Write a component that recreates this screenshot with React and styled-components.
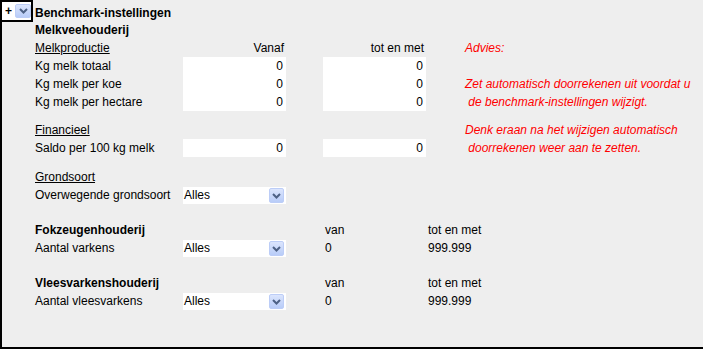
import React from 'react';
import styled, { createGlobalStyle } from 'styled-components';

const Global = createGlobalStyle`
  html, body { margin: 0; padding: 0; background: #eeeeee; }
  body {
    font-family: "Liberation Sans", Arial, sans-serif;
    font-size: 12px;
    color: #000;
  }
`;

const Panel = styled.div`
  box-sizing: border-box;
  width: 703px;
  height: 349px;
  background: #eeeeee;
  border-left: 2px solid #000;
  border-bottom: 2px solid #000;
  display: flex;
  flex-direction: column;
`;

const Header = styled.div`
  display: flex;
  align-items: center;
  height: 22px;
  gap: 2px;
`;

const ToggleBox = styled.div`
  box-sizing: border-box;
  margin-left: -2px;
  width: 33px;
  height: 22px;
  border: 2px solid #000;
  background: #fff;
  display: flex;
  align-items: center;
  justify-content: space-between;
  padding-left: 3px;
  font-size: 12px;
  font-weight: bold;
`;

const ArrowButton = styled.span`
  box-sizing: border-box;
  width: ${p => p.$w}px;
  height: ${p => p.$h}px;
  border: 1px solid #bccdf7;
  border-radius: 2px;
  background: linear-gradient(#dbe5fd, #b8ccf8);
  display: flex;
  align-items: center;
  justify-content: center;
`;

const Title = styled.span`
  font-weight: bold;
  font-size: 12px;
  line-height: 22px;
  padding-top: 3px;
`;

const Body = styled.div`
  padding-left: 33px;
  display: flex;
  flex-direction: column;
`;

const SectionTitle = styled.div`
  font-weight: bold;
  height: ${p => p.$h || 18}px;
  line-height: ${p => p.$h || 18}px;
  white-space: nowrap;
`;

const Section = styled.div`
  margin-top: ${p => p.$mt || 0}px;
`;

const FormGrid = styled.div`
  display: grid;
  grid-template-columns: 148px 103px 37px 103px 39px 1fr;
  grid-template-rows: repeat(4, 18px) 10px repeat(2, 18px);
  line-height: 18px;
  white-space: nowrap;
`;

const RangeGrid = styled.div`
  display: grid;
  grid-template-columns: 148px 103px 37px 103px 1fr;
  grid-auto-rows: 18px;
  line-height: 18px;
  white-space: nowrap;
`;

const Spacer = styled.div`
  grid-column: 1 / -1;
`;

const Label = styled.span``;

const Underlined = styled.span`
  text-decoration: underline;
  text-underline-offset: 1px;
`;

const HeadRight = styled.span`
  text-align: right;
  padding-right: 2px;
`;

const Plain = styled.span`
  padding-left: 2px;
`;

const Field = styled.span`
  background: #fff;
  text-align: right;
  padding-right: 3px;
`;

const Advice = styled.span`
  color: #ff0000;
  font-style: italic;
  white-space: pre;
`;

const SelectBox = styled.span`
  box-sizing: border-box;
  height: 17px;
  margin-top: 1px;
  background: #fff;
  display: flex;
  align-items: center;
  justify-content: space-between;
  padding: 0 2px 0 1px;
  line-height: 17px;
`;

const Chevron = () => (
  <svg width="9" height="6" viewBox="0 0 9 6">
    <path d="M1 1 L4.5 4.5 L8 1" fill="none" stroke="#4d6185" strokeWidth="2" />
  </svg>
);

const Select = ({ value }) => (
  <SelectBox>
    <span>{value}</span>
    <ArrowButton $w={15} $h={15}><Chevron /></ArrowButton>
  </SelectBox>
);

const e = (k) => <span key={k} />;

export default function App() {
  return (
    <>
      <Global />
      <Panel>
        <Header>
          <ToggleBox>
            <span>+</span>
            <ArrowButton $w={16} $h={14}><Chevron /></ArrowButton>
          </ToggleBox>
          <Title>Benchmark-instellingen</Title>
        </Header>
        <Body>
          <SectionTitle $h={17}>Melkveehouderij</SectionTitle>
          <FormGrid>
            <Underlined>Melkproductie</Underlined>
            <HeadRight>Vanaf</HeadRight>
            {e(1)}
            <HeadRight>tot en met</HeadRight>
            {e(2)}
            <Advice>Advies:</Advice>

            <Label>Kg melk totaal</Label>
            <Field>0</Field>
            {e(3)}
            <Field>0</Field>
            {e(4)}
            {e(5)}

            <Label>Kg melk per koe</Label>
            <Field>0</Field>
            {e(6)}
            <Field>0</Field>
            {e(7)}
            <Advice>Zet automatisch doorrekenen uit voordat u</Advice>

            <Label>Kg melk per hectare</Label>
            <Field>0</Field>
            {e(8)}
            <Field>0</Field>
            {e(9)}
            <Advice> de benchmark-instellingen wijzigt.</Advice>

            <Spacer />

            <Underlined>Financieel</Underlined>
            {e(10)}
            {e(11)}
            {e(12)}
            {e(13)}
            <Advice>Denk eraan na het wijzigen automatisch</Advice>

            <Label>Saldo per 100 kg melk</Label>
            <Field>0</Field>
            {e(14)}
            <Field>0</Field>
            {e(15)}
            <Advice> doorrekenen weer aan te zetten.</Advice>
          </FormGrid>

          <Section $mt={11}>
            <RangeGrid>
              <Underlined>Grondsoort</Underlined>
              {e(1)}{e(2)}{e(3)}{e(4)}
              <Label>Overwegende grondsoort</Label>
              <Select value="Alles" />
              {e(5)}{e(6)}{e(7)}
            </RangeGrid>
          </Section>

          <Section $mt={17}>
            <RangeGrid>
              <SectionTitle>Fokzeugenhouderij</SectionTitle>
              {e(1)}{e(2)}
              <Plain>van</Plain>
              <Plain>tot en met</Plain>
              <Label>Aantal varkens</Label>
              <Select value="Alles" />
              {e(3)}
              <Plain>0</Plain>
              <Plain>999.999</Plain>
            </RangeGrid>
          </Section>

          <Section $mt={17}>
            <RangeGrid>
              <SectionTitle>Vleesvarkenshouderij</SectionTitle>
              {e(1)}{e(2)}
              <Plain>van</Plain>
              <Plain>tot en met</Plain>
              <Label>Aantal vleesvarkens</Label>
              <Select value="Alles" />
              {e(3)}
              <Plain>0</Plain>
              <Plain>999.999</Plain>
            </RangeGrid>
          </Section>
        </Body>
      </Panel>
    </>
  );
}
